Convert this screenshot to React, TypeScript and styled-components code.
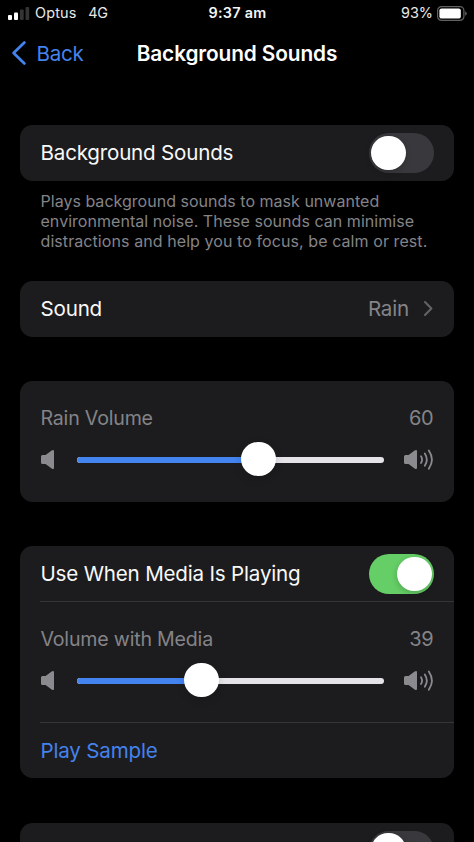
import React from "react";
import styled, { createGlobalStyle } from "styled-components";

const GlobalStyle = createGlobalStyle`
  *, *::before, *::after { box-sizing: border-box; }
  html, body { margin: 0; background: #000; overflow: hidden; }
  body { font-family: Inter, "Liberation Sans", sans-serif; color: #fff; }
`;

const Screen = styled.div`
  width: 474px;
  height: 842px;
  overflow: hidden;
  background: #000;
  display: flex;
  flex-direction: column;
`;

const StatusBar = styled.header`
  height: 26px;
  flex: none;
  display: grid;
  grid-template-columns: 1fr auto 1fr;
  align-items: center;
  padding: 0 7px 0 8px;
  font-size: 14.4px;
  line-height: 26px;
  color: #e8e8e8;
`;

const StatusGroup = styled.div<{ $end?: boolean }>`
  display: flex;
  align-items: center;
  justify-content: ${(p) => (p.$end ? "flex-end" : "flex-start")};
`;

const Carrier = styled.span`
  margin-left: 5px;
  letter-spacing: 0.2px;
`;

const Network = styled.span`
  margin-left: 11.5px;
  letter-spacing: -0.1px;
`;

const Clock = styled.span`
  font-weight: 600;
  letter-spacing: 0.3px;
  color: #f4f4f4;
`;

const Percent = styled.span`
  margin-right: 4px;
  letter-spacing: 0;
`;

const NavBar = styled.nav`
  height: 54px;
  flex: none;
  display: grid;
  grid-template-columns: 1fr auto 1fr;
  align-items: center;
  padding: 0 12px;
`;

const BackButton = styled.a`
  display: flex;
  align-items: center;
  gap: 10.5px;
  color: #4482ec;
  font-size: 20.6px;
  letter-spacing: -0.25px;
`;

const Title = styled.h1`
  margin: 0;
  font-size: 20.8px;
  font-weight: 600;
  letter-spacing: -0.1px;
`;

const Content = styled.main`
  display: flex;
  flex-direction: column;
  padding: 45px 20px 0;
`;

const Card = styled.section<{ $gap?: number }>`
  flex: none;
  margin-top: ${(p) => p.$gap ?? 0}px;
  border-radius: 12.5px;
  background: #1c1c1e;
`;

const Row = styled.div`
  height: 55.5px;
  display: flex;
  align-items: center;
  justify-content: space-between;
  padding: 0 20.5px 0 20.5px;
`;

const ActionRow = styled(Row)`
  padding-top: 2px;
`;

const Label = styled.span<{ $tone?: "link" | "muted"; $size?: number }>`
  font-size: ${(p) => p.$size ?? 20.6}px;
  line-height: 26px;
  letter-spacing: -0.2px;
  color: ${(p) =>
    p.$tone === "link" ? "#4482ec" : p.$tone === "muted" ? "#848488" : "#f8f8f8"};
`;

const Value = styled.span`
  display: flex;
  align-items: center;
  gap: 15px;
  padding-right: 1px;
`;

const Note = styled.p`
  margin: 10.3px 0 0;
  padding: 0 20.5px;
  font-size: 16px;
  line-height: 20.2px;
  color: #848488;
  white-space: nowrap;
`;

const NoteLine = styled.span<{ $spacing: number }>`
  display: block;
  letter-spacing: ${(p) => p.$spacing}px;
`;

const Switch = styled.span<{ $on?: boolean }>`
  width: 64.5px;
  height: 39.5px;
  flex: none;
  display: flex;
  align-items: center;
  justify-content: ${(p) => (p.$on ? "flex-end" : "flex-start")};
  padding: 0 2px;
  border-radius: 20px;
  background: ${(p) => (p.$on ? "#65ce66" : "#39393d")};
`;

const SwitchKnob = styled.span`
  width: 34.5px;
  height: 34.5px;
  border-radius: 50%;
  background: #fff;
  box-shadow: 0 2px 6px rgba(0, 0, 0, 0.2);
`;

const VolumeBlock = styled.div`
  height: 121px;
  padding: 24px 20.5px 0 20.5px;
`;

const VolumeHeader = styled.div`
  height: 26px;
  display: flex;
  justify-content: space-between;
`;

const SliderRow = styled.div`
  height: 34px;
  margin-top: 12px;
  display: grid;
  grid-template-columns: 36.5px 307px 1fr;
  align-items: center;
`;

const SliderArea = styled.div`
  position: relative;
  height: 34px;
  display: flex;
  align-items: center;
`;

const Track = styled.div`
  width: 100%;
  height: 5.5px;
  margin-top: 1px;
  border-radius: 3px;
  overflow: hidden;
  background: #e5e3e8;
`;

const Fill = styled.div`
  height: 100%;
  border-radius: 3px 0 0 3px;
  background: #4384f0;
`;

const SliderKnob = styled.span`
  position: absolute;
  top: -1px;
  width: 34.6px;
  height: 34.6px;
  margin-left: -17.3px;
  border-radius: 50%;
  background: #fff;
  box-shadow: 0 3px 8px rgba(0, 0, 0, 0.15);
`;

const LoudSlot = styled.span`
  display: flex;
  justify-content: flex-end;
`;

const Divider = styled.hr`
  height: 1px;
  margin: -1px 0 0 20px;
  border: 0;
  background: #353538;
`;

const Glyph = styled.svg`
  display: block;
  flex: none;
  overflow: visible;
`;

const SPEAKER =
  "M1.5 5.1H4.6L10.6.5Q13 -1 13 1.3V17.7Q13 20 10.6 18.5L4.6 13.9H1.5Q0 13.9 0 12.4V6.6Q0 5.1 1.5 5.1Z";

function QuietIcon() {
  return (
    <Glyph width="13" height="19" viewBox="0 0 13 19" fill="#8b8b8f">
      <path d={SPEAKER} />
    </Glyph>
  );
}

function LoudIcon() {
  return (
    <Glyph width="29.5" height="19" viewBox="0 0 29.5 19">
      <path d={SPEAKER} fill="#8b8b8f" />
      <g fill="none" stroke="#8b8b8f" strokeWidth="1.8" strokeLinecap="round">
        <path d="M17 6.2Q19.2 9.6 17 13" />
        <path d="M20.8 3.5Q24.8 9.6 20.8 15.7" />
        <path d="M24.8 0.5Q31 9.6 24.8 18.7" />
      </g>
    </Glyph>
  );
}

function SignalIcon() {
  return (
    <Glyph width="22" height="14" viewBox="0 0 22 14">
      <rect x="0" y="9" width="4" height="5" rx="1" fill="#fff" />
      <rect x="6" y="6.5" width="4" height="7.5" rx="1" fill="#fff" />
      <rect x="12" y="3.5" width="3.7" height="10.5" rx="1" fill="#343434" />
      <rect x="17.5" y="1" width="3.7" height="13" rx="1" fill="#343434" />
    </Glyph>
  );
}

function BatteryIcon() {
  return (
    <Glyph width="30" height="15" viewBox="0 0 30 15">
      <rect x="0.6" y="0.6" width="26.3" height="13.8" rx="4" fill="none" stroke="#626262" strokeWidth="1.2" />
      <rect x="2.4" y="2.4" width="21.4" height="10.2" rx="2.2" fill="#fff" />
      <path d="M28.2 5.2Q29.8 6 29.8 7.5T28.2 9.8Z" fill="#626262" />
    </Glyph>
  );
}

function Toggle({ on }: { on?: boolean }) {
  return (
    <Switch $on={on} role="switch" aria-checked={!!on}>
      <SwitchKnob />
    </Switch>
  );
}

function Volume({ label, value, position }: {
  label: string;
  value: number;
  position: number;
}) {
  return (
    <VolumeBlock>
      <VolumeHeader>
        <Label $tone="muted" $size={19.6}>{label}</Label>
        <Label $tone="muted" $size={20}>{value}</Label>
      </VolumeHeader>
      <SliderRow>
        <QuietIcon />
        <SliderArea>
          <Track>
            <Fill style={{ width: `${position}px` }} />
          </Track>
          <SliderKnob style={{ left: `${position}px` }} />
        </SliderArea>
        <LoudSlot>
          <LoudIcon />
        </LoudSlot>
      </SliderRow>
    </VolumeBlock>
  );
}

export default function App() {
  return (
    <Screen>
      <GlobalStyle />
      <StatusBar>
        <StatusGroup>
          <SignalIcon />
          <Carrier>Optus</Carrier>
          <Network>4G</Network>
        </StatusGroup>
        <Clock>9:37 am</Clock>
        <StatusGroup $end>
          <Percent>93%</Percent>
          <BatteryIcon />
        </StatusGroup>
      </StatusBar>
      <NavBar>
        <BackButton>
          <Glyph width="14" height="24" viewBox="0 0 14 24" fill="none" stroke="#4482ec" strokeWidth="2.8" strokeLinecap="round" strokeLinejoin="round">
            <path d="M12.4 1.6L1.6 12L12.4 22.4" />
          </Glyph>
          Back
        </BackButton>
        <Title>Background Sounds</Title>
      </NavBar>
      <Content>
        <Card>
          <Row>
            <Label>Background Sounds</Label>
            <Toggle />
          </Row>
        </Card>
        <Note>
          <NoteLine $spacing={0.02}>Plays background sounds to mask unwanted</NoteLine>
          <NoteLine $spacing={0.04}>environmental noise. These sounds can minimise</NoteLine>
          <NoteLine $spacing={0.08}>distractions and help you to focus, be calm or rest.</NoteLine>
        </Note>
        <Card $gap={29.6}>
          <Row>
            <Label>Sound</Label>
            <Value>
              <Label $tone="muted">Rain</Label>
              <Glyph width="8.5" height="15" viewBox="0 0 8.5 15" fill="none" stroke="#626266" strokeWidth="2.1" strokeLinecap="round" strokeLinejoin="round">
                <path d="M1 1L7.4 7.5L1 14" />
              </Glyph>
            </Value>
          </Row>
        </Card>
        <Card $gap={44}>
          <Volume label="Rain Volume" value={60} position={181.3} />
        </Card>
        <Card $gap={44.5}>
          <Row>
            <Label>Use When Media Is Playing</Label>
            <Toggle on />
          </Row>
          <Divider />
          <Volume label="Volume with Media" value={39} position={124.5} />
          <Divider />
          <ActionRow>
            <Label $tone="link">Play Sample</Label>
          </ActionRow>
        </Card>
        <Card $gap={44.5}>
          <Row>
            <span />
            <Toggle />
          </Row>
        </Card>
      </Content>
    </Screen>
  );
}
